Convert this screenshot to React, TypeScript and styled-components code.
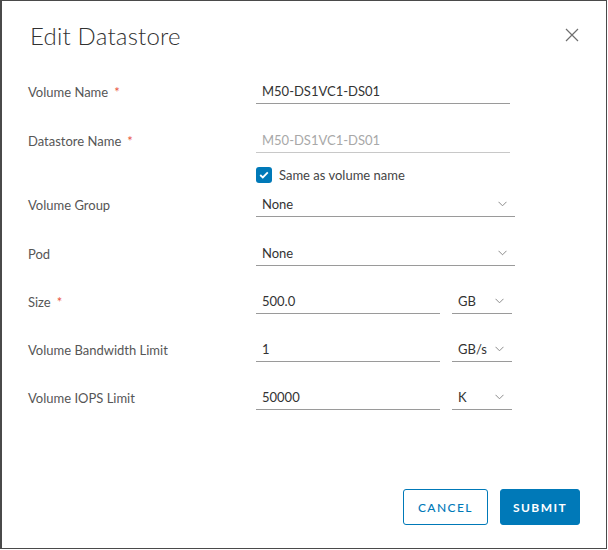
import React from "react";
import styled, { createGlobalStyle } from "styled-components";

const Global = createGlobalStyle`
  html, body { margin: 0; padding: 0; background: #fff; }
  body { font-family: Lato, "Open Sans", sans-serif; }
  * { box-sizing: border-box; }
`;

const Dialog = styled.div`
  width: 607px;
  height: 549px;
  border: 1px solid #4a4a4a;
  border-left-width: 2px;
  background: #fff;
  display: flex;
  flex-direction: column;
`;

const Header = styled.div`
  display: flex;
  align-items: center;
  justify-content: space-between;
  padding: 10px 26px 0 28px;
  height: 58px;
`;

const Title = styled.h1`
  margin: 0;
  font-size: 24px;
  font-weight: 300;
  color: #313131;
  letter-spacing: 0.2px;
`;

const CloseButton = styled.button`
  border: 0;
  background: none;
  padding: 0;
  width: 16px;
  height: 16px;
  display: flex;
  cursor: pointer;
`;

const Form = styled.div`
  display: flex;
  flex-direction: column;
  padding: 20px 0 0 26px;
`;

const Row = styled.div<{ $mt: number; $h?: number }>`
  display: grid;
  grid-template-columns: 228px auto;
  align-items: center;
  height: ${(p) => p.$h ?? 25}px;
  margin-top: ${(p) => p.$mt}px;
`;

const Label = styled.label`
  font-size: 13px;
  color: #565656;
`;

const Req = styled.span`
  color: #e9583f;
  margin-left: 6px;
`;

const Controls = styled.div`
  display: flex;
  gap: 12px;
`;

const Input = styled.div<{ $w: number; $disabled?: boolean }>`
  width: ${(p) => p.$w}px;
  height: 25px;
  border-bottom: 1px solid ${(p) => (p.$disabled ? "#c8c8c8" : "#9a9a9a")};
  padding: 0 6px;
  display: flex;
  align-items: center;
  font-size: 13px;
  color: ${(p) => (p.$disabled ? "#a8a8a8" : "#333")};
`;

const Select = styled(Input)`
  justify-content: space-between;
  padding: 0 8px 0 6px;
`;

const Chevron = () => (
  <svg width="9" height="6" viewBox="0 0 9 6">
    <path d="M0.5 0.8 L4.5 4.8 L8.5 0.8" fill="none" stroke="#8c8c8c" strokeWidth="1" />
  </svg>
);

const CheckRow = styled.div`
  display: flex;
  align-items: center;
  gap: 7px;
  font-size: 13px;
  color: #454545;
`;

const Box = styled.span`
  width: 16px;
  height: 16px;
  border-radius: 3px;
  background: #0079b8;
  display: flex;
  align-items: center;
  justify-content: center;
`;

const Footer = styled.div`
  margin-top: auto;
  display: flex;
  justify-content: flex-end;
  gap: 12px;
  padding: 0 26px 23px 0;
`;

const Button = styled.button<{ $primary?: boolean }>`
  height: 36px;
  padding: ${(p) => (p.$primary ? "0 10px" : "0 14px")};
  min-width: 80px;
  border-radius: 3px;
  border: 1px solid #0079b8;
  background: ${(p) => (p.$primary ? "#0079b8" : "#fff")};
  color: ${(p) => (p.$primary ? "#fff" : "#0079b8")};
  font-family: Lato, sans-serif;
  font-size: 12px;
  font-weight: ${(p) => (p.$primary ? 700 : 500)};
  letter-spacing: 0.12em;
  cursor: pointer;
`;

export default function App() {
  return (
    <>
      <Global />
      <Dialog>
        <Header>
          <Title>Edit Datastore</Title>
          <CloseButton aria-label="Close">
            <svg width="16" height="16" viewBox="0 0 16 16">
              <path d="M2 2 L14 14 M14 2 L2 14" stroke="#6f6f6f" strokeWidth="1.2" fill="none" />
            </svg>
          </CloseButton>
        </Header>
        <Form>
          <Row $mt={0}>
            <Label>
              Volume Name<Req>*</Req>
            </Label>
            <Input $w={254}>M50-DS1VC1-DS01</Input>
          </Row>
          <Row $mt={24}>
            <Label>
              Datastore Name<Req>*</Req>
            </Label>
            <Input $w={254} $disabled>
              M50-DS1VC1-DS01
            </Input>
          </Row>
          <Row $mt={14} $h={16}>
            <span />
            <CheckRow>
              <Box>
                <svg width="10" height="8" viewBox="0 0 10 8">
                  <path d="M1.2 4 L3.8 6.4 L8.8 1.4" stroke="#fff" strokeWidth="1.8" fill="none" />
                </svg>
              </Box>
              Same as volume name
            </CheckRow>
          </Row>
          <Row $mt={9}>
            <Label>Volume Group</Label>
            <Select $w={259}>
              None
              <Chevron />
            </Select>
          </Row>
          <Row $mt={24}>
            <Label>Pod</Label>
            <Select $w={259}>
              None
              <Chevron />
            </Select>
          </Row>
          <Row $mt={23}>
            <Label>
              Size<Req>*</Req>
            </Label>
            <Controls>
              <Input $w={184}>500.0</Input>
              <Select $w={60}>
                GB
                <Chevron />
              </Select>
            </Controls>
          </Row>
          <Row $mt={23}>
            <Label>Volume Bandwidth Limit</Label>
            <Controls>
              <Input $w={184}>1</Input>
              <Select $w={60}>
                GB/s
                <Chevron />
              </Select>
            </Controls>
          </Row>
          <Row $mt={23}>
            <Label>Volume IOPS Limit</Label>
            <Controls>
              <Input $w={184}>50000</Input>
              <Select $w={60}>
                K
                <Chevron />
              </Select>
            </Controls>
          </Row>
        </Form>
        <Footer>
          <Button>CANCEL</Button>
          <Button $primary>SUBMIT</Button>
        </Footer>
      </Dialog>
    </>
  );
}
